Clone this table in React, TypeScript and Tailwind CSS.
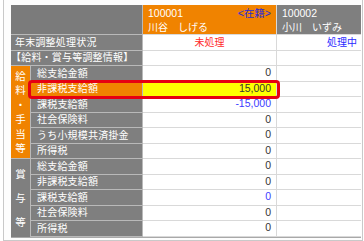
import React from 'react';

const font = { fontFamily: '"Liberation Sans", "Noto Sans CJK JP", sans-serif' };

type Row = { label: string; value: string; tone: string; highlight?: boolean };

const salaryRows: Row[] = [
  { label: '総支給金額', value: '0', tone: 'text-[#333333]' },
  { label: '非課税支給額', value: '15,000', tone: 'text-[#333333]', highlight: true },
  { label: '課税支給額', value: '-15,000', tone: 'text-[#3b3bff]' },
  { label: '社会保険料', value: '0', tone: 'text-[#333333]' },
  { label: 'うち小規模共済掛金', value: '0', tone: 'text-[#333333]' },
  { label: '所得税', value: '0', tone: 'text-[#333333]' },
];

const bonusRows: Row[] = [
  { label: '総支給金額', value: '0', tone: 'text-[#333333]' },
  { label: '非課税支給額', value: '0', tone: 'text-[#333333]' },
  { label: '課税支給額', value: '0', tone: 'text-[#3b3bff]' },
  { label: '社会保険料', value: '0', tone: 'text-[#333333]' },
  { label: '所得税', value: '0', tone: 'text-[#333333]' },
];

function DataRow({ row }: { row: Row }) {
  return (
    <>
      <div
        className={`flex items-center pl-[6px] text-[10px] tracking-[0.2px] text-white border-b border-r border-[#b9b9b9] ${
          row.highlight ? 'bg-[#f08300]' : 'bg-[#7f7f7f]'
        }`}
      >
        {row.label}
      </div>
      <div
        className={`flex items-center justify-end pr-[5px] text-[10.5px] border-b border-r border-[#d9d9d9] ${
          row.highlight ? 'bg-[#ffff00]' : 'bg-white'
        } ${row.tone}`}
      >
        {row.value}
      </div>
      <div className="bg-white border-b border-[#d9d9d9]" />
    </>
  );
}

export default function App() {
  return (
    <div className="w-[364px] h-[241px] bg-white" style={font}>
      <div className="ml-[3px] w-[360px] h-[241px] border-l border-r border-b border-[#c9c9c9] bg-[#fdfdfd] pl-[7px] pt-[5px]">
        <div className="relative w-[350px]">
          <div className="grid grid-cols-[20px_112px_134px_84px] grid-rows-[30px_repeat(13,15.5px)] border-r border-b border-[#a9a9a9]">
            {/* header */}
            <div className="col-span-2 bg-[#7b7b7b] border-b border-r border-[#b9b9b9]" />
            <div className="bg-[#f08300] text-white px-[5px] pt-[1px] text-[10.5px] leading-[14px] border-b border-r border-[#d9d9d9]">
              <div className="flex justify-between">
                <span>100001</span>
                <span className="text-[#2b2bd6]">&lt;在籍&gt;</span>
              </div>
              <div className="text-[10px] mt-[1px]">川谷　しげる</div>
            </div>
            <div className="bg-[#7f7f7f] text-white px-[5px] pt-[1px] text-[10.5px] leading-[14px] border-b border-[#d9d9d9]">
              <div>100002</div>
              <div className="text-[10px] mt-[1px]">小川　いずみ</div>
            </div>

            {/* status */}
            <div className="col-span-2 flex items-center pl-[4px] bg-[#7f7f7f] text-white text-[10px] tracking-[0.2px] border-b border-r border-[#b9b9b9]">
              年末調整処理状況
            </div>
            <div className="flex items-center justify-center bg-white text-[10px] text-[#ff2a2a] border-b border-r border-[#d9d9d9]">
              未処理
            </div>
            <div className="flex items-center justify-end pr-[4px] bg-white text-[10px] text-[#2a2aff] border-b border-[#d9d9d9]">
              処理中
            </div>

            <div className="col-span-2 flex items-center bg-[#7f7f7f] text-white text-[10px] tracking-[0.2px] border-b border-r border-[#b9b9b9]">
              【給料・賞与等調整情報】
            </div>
            <div className="bg-white border-b border-r border-[#d9d9d9]" />
            <div className="bg-white border-b border-[#d9d9d9]" />

            {/* salary block */}
            <div className="row-span-6 flex flex-col items-center justify-center bg-[#f08300] text-white text-[10.5px] leading-[14.5px] border-b border-r border-[#b9b9b9]">
              {['給', '料', '・', '手', '当', '等'].map((c, i) => (
                <span key={i}>{c}</span>
              ))}
            </div>
            {salaryRows.map((r, i) => (
              <DataRow key={'s' + i} row={r} />
            ))}

            {/* bonus block */}
            <div className="row-span-5 flex flex-col items-center justify-center gap-[10px] bg-[#7f7f7f] text-white text-[10.5px] leading-[14px] border-r border-[#b9b9b9]">
              {['賞', '与', '等'].map((c, i) => (
                <span key={i}>{c}</span>
              ))}
            </div>
            {bonusRows.map((r, i) => (
              <DataRow key={'b' + i} row={r} />
            ))}
          </div>

          {/* highlight annotation */}
          <div className="absolute left-[17px] top-[75px] w-[252px] h-[19px] border-[3px] border-[#e60012] rounded-[4px] pointer-events-none" />
        </div>
      </div>
    </div>
  );
}
